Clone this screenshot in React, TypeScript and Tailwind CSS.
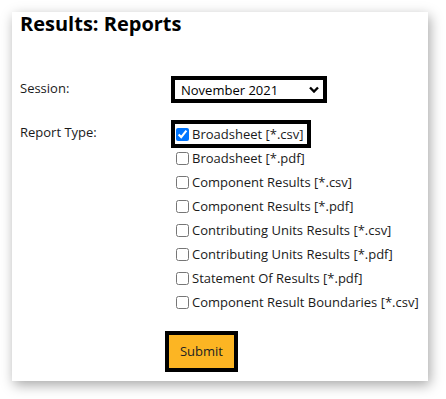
import React from "react";

const options = [
  "Broadsheet [*.csv]",
  "Broadsheet [*.pdf]",
  "Component Results [*.csv]",
  "Component Results [*.pdf]",
  "Contributing Units Results [*.csv]",
  "Contributing Units Results [*.pdf]",
  "Statement Of Results [*.pdf]",
  "Component Result Boundaries [*.csv]",
];

export default function App() {
  return (
    <div
      className="w-[446px] h-[399px] bg-white p-[12px]"
      style={{ fontFamily: '"Open Sans", "Liberation Sans", sans-serif' }}
    >
      <div className="w-[416px] h-[369px] bg-white shadow-[2px_4px_12px_rgba(0,0,0,0.35)] pl-[8px] text-[#1a1a1a]">
        <h1 className="text-[20px] leading-[24px] font-bold text-black">Results: Reports</h1>

        <div className="grid grid-cols-[151px_1fr] mt-[40px]">
          <div className="text-[13px] leading-[18px] pt-[3px]">Session:</div>
          <div className="relative w-[156px] h-[27px]">
            <select
              defaultValue="November 2021"
              className="appearance-none w-full h-full border-[4px] border-black bg-white pl-[6px] text-[13px] leading-[18px] text-black outline-none"
              style={{ fontFamily: '"Open Sans", "Liberation Sans", sans-serif' }}
            >
              <option>November 2021</option>
              <option>June 2021</option>
            </select>
            <svg
              className="absolute right-[8px] top-[10px] pointer-events-none"
              width="10"
              height="7"
              viewBox="0 0 10 7"
            >
              <polyline points="1,1.5 5,5.5 9,1.5" fill="none" stroke="#000" strokeWidth="2.4" />
            </svg>
          </div>

          <div className="text-[13px] leading-[18px] pt-[1px] mt-[19px]">Report Type:</div>
          <div className="mt-[19px] flex flex-col">
            {options.map((o, i) => (
              <div key={o} className="h-[24px] flex items-center">
                <label
                  className={
                    "ml-[4px] h-[20px] inline-flex items-center pl-[1px] pr-[4px] text-[13px] leading-[18px] " +
                    (i === 0 ? "outline-[4px] outline outline-black" : "")
                  }
                >
                  <input type="checkbox" defaultChecked={i === 0} className="m-0 w-[13px] h-[13px]" />
                  <span className="ml-[3px]">{o}</span>
                </label>
              </div>
            ))}
          </div>

          <div />
          <div className="mt-[17px] ml-[-6px]">
            <button className="w-[73px] h-[41px] border-[4px] border-black bg-[#fcb523] text-[13px] text-[#222]">
              Submit
            </button>
          </div>
        </div>
      </div>
    </div>
  );
}
